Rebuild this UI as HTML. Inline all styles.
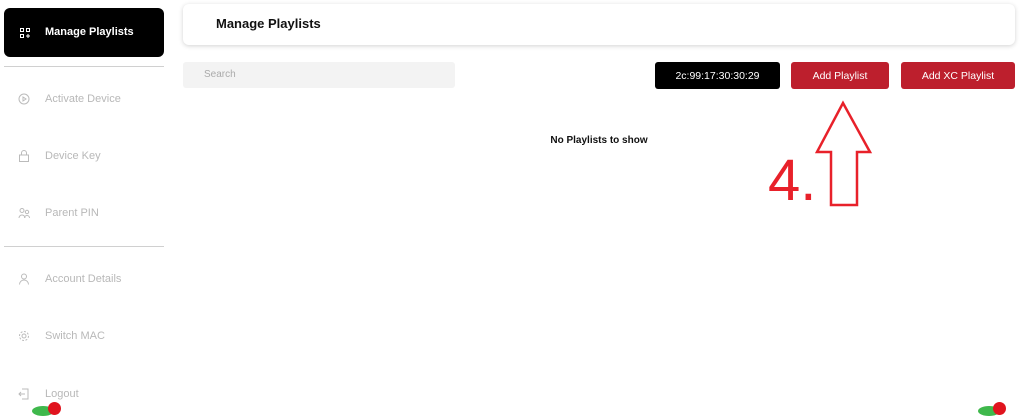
<!DOCTYPE html>
<html><head><meta charset="utf-8"><style>
*{margin:0;padding:0;box-sizing:border-box}
body{width:1024px;height:409px;overflow:hidden;background:#fff;font-family:"Liberation Sans",sans-serif;position:relative}
.nav{position:absolute;left:4px;top:8px;width:160px;height:49px;background:#000;border-radius:6px;color:#fff;font-weight:bold;font-size:11px}
.item{position:absolute;left:18px;font-size:11px;color:#b8b8b8;display:flex;align-items:center}
.item svg{width:12px;height:12px;margin-right:15px;flex:none}
.hr{position:absolute;left:4px;width:160px;height:1px;background:#d0d0d0}
.card{position:absolute;left:183px;top:4px;width:832px;height:41px;border-radius:6px;box-shadow:0 1px 5px rgba(0,0,0,.18);background:#fff}
.card span{position:absolute;left:33px;top:12px;font-weight:bold;font-size:13px;color:#111}
.search{position:absolute;left:183px;top:62px;width:272px;height:26px;background:#f3f3f3;border-radius:3px;font-size:10px;color:#aaa;padding:7px 0 0 21px}
.btn{position:absolute;top:62px;height:27px;border-radius:3px;color:#fff;font-size:10.5px;display:flex;align-items:center;justify-content:center}
</style></head><body>
<div class="nav"><svg style="position:absolute;left:16px;top:20px" width="10" height="10" viewBox="0 0 10 10" fill="none" stroke="#fff" stroke-width="1"><rect x=".5" y=".5" width="3" height="3"/><rect x="6.5" y=".5" width="3" height="3"/><rect x=".5" y="6.5" width="3" height="3"/><path d="M8 6v4M6 8h4"/></svg><span style="position:absolute;left:41px;top:18px">Manage Playlists</span></div>
<div class="hr" style="top:66px"></div>
<div class="item" style="top:93px"><svg viewBox="0 0 12 12" fill="none" stroke="#bbb"><circle cx="6" cy="6" r="5"/><path d="M5 4l3 2-3 2z"/></svg>Activate Device</div>
<div class="item" style="top:150px"><svg viewBox="0 0 12 12" fill="none" stroke="#bbb"><rect x="1.5" y="5" width="9" height="6.5"/><path d="M3.5 5V3a2.5 2.5 0 015 0v2"/></svg>Device Key</div>
<div class="item" style="top:207px"><svg viewBox="0 0 12 12" fill="none" stroke="#bbb"><circle cx="4" cy="3.5" r="2"/><circle cx="9" cy="5" r="1.7"/><path d="M1 11a3 3 0 016 0M6.5 11a2.5 2.5 0 015 0"/></svg>Parent PIN</div>
<div class="hr" style="top:246px"></div>
<div class="item" style="top:273px"><svg viewBox="0 0 12 12" fill="none" stroke="#bbb"><circle cx="6" cy="3.5" r="2.5"/><path d="M1.5 11.5a4.5 4.5 0 019 0"/></svg>Account Details</div>
<div class="item" style="top:330px"><svg viewBox="0 0 12 12" fill="none" stroke="#bbb"><circle cx="6" cy="6" r="2"/><circle cx="6" cy="6" r="4.5" stroke-dasharray="2 1.5"/></svg>Switch MAC</div>
<div class="item" style="top:388px"><svg viewBox="0 0 12 12" fill="none" stroke="#bbb"><path d="M4 1h6v10H4M7 6H1M3 4L1 6l2 2"/></svg>Logout</div>
<div style="position:absolute;left:32px;top:406px;width:22px;height:10px;border-radius:50%;background:#3fb84c"></div>
<div style="position:absolute;left:48px;top:402px;width:13px;height:13px;border-radius:50%;background:#e0141e"></div>
<div style="position:absolute;left:978px;top:406px;width:22px;height:10px;border-radius:50%;background:#3fb84c"></div>
<div style="position:absolute;left:993px;top:402px;width:13px;height:13px;border-radius:50%;background:#e0141e"></div>
<div class="card"><span>Manage Playlists</span></div>
<div class="search">Search</div>
<div class="btn" style="left:655px;width:125px;background:#000">2c:99:17:30:30:29</div>
<div class="btn" style="left:791px;width:98px;background:#bd1f2d">Add Playlist</div>
<div class="btn" style="left:901px;width:114px;background:#bd1f2d">Add XC Playlist</div>
<div style="position:absolute;left:0;width:1198px;top:135px;text-align:center;font-weight:bold;font-size:10px;color:#111">No Playlists to show</div>
<div style="position:absolute;left:768px;top:151px;font-size:58px;color:#e8212a;line-height:60px">4.</div>
<svg style="position:absolute;left:0;top:0" width="1024" height="409"><path d="M843 103L817 152H831V205H857V152H870Z" fill="none" stroke="#e8212a" stroke-width="2.5"/></svg>
</body></html>
